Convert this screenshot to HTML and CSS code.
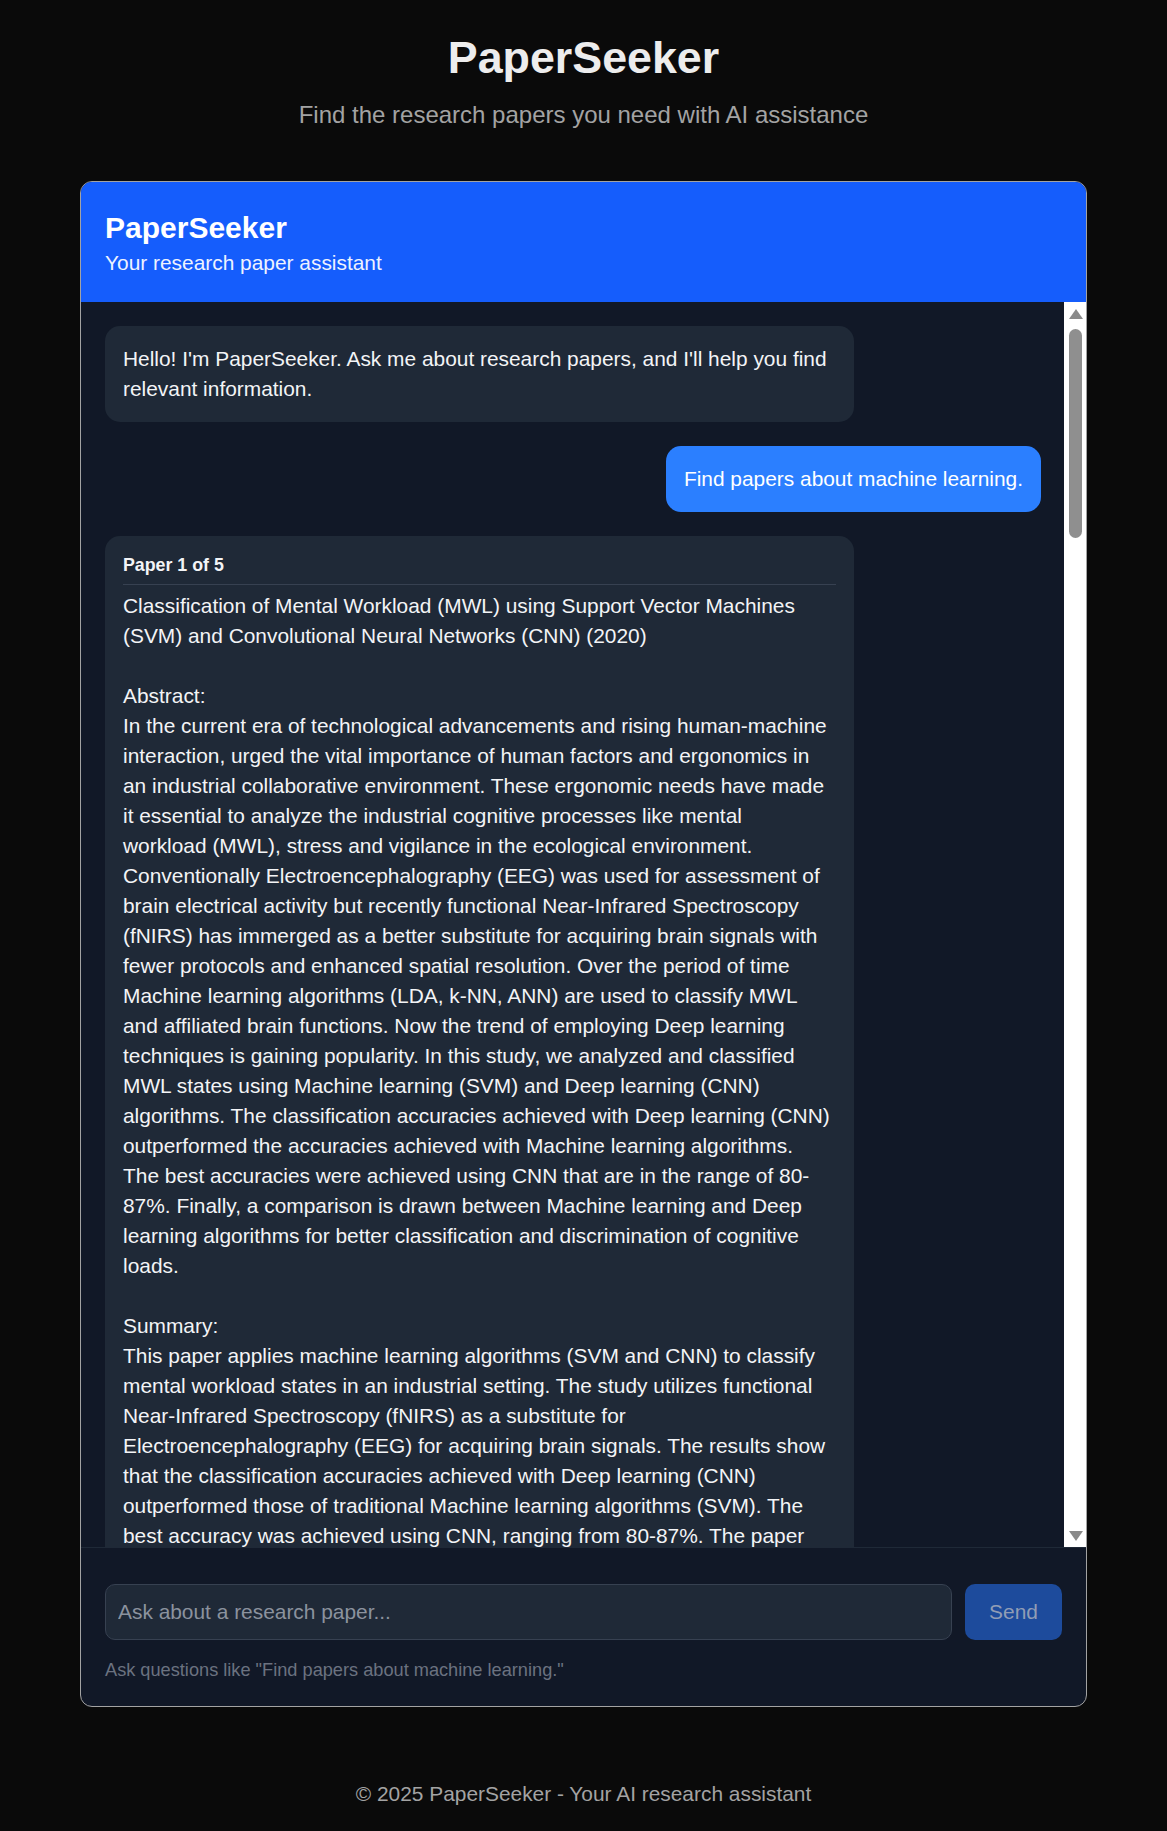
FILE: index.html
```html
<!DOCTYPE html>
<html lang="en">
<head>
<meta charset="utf-8">
<title>PaperSeeker</title>
<link rel="stylesheet" href="styles.css">
</head>
<body>
<main class="page">
  <header class="hero">
    <h1 class="hero-title">PaperSeeker</h1>
    <p class="hero-sub">Find the research papers you need with AI assistance</p>
  </header>

  <section class="chat">
    <div class="chat-head">
      <h2 class="chat-title">PaperSeeker</h2>
      <p class="chat-sub">Your research paper assistant</p>
    </div>

    <div class="msg-area">
      <div class="messages">
        <div class="msg msg-bot">Hello! I'm PaperSeeker. Ask me about research papers, and I'll help you find relevant information.</div>

        <div class="msg msg-user">Find papers about machine learning.</div>

        <div class="msg msg-bot">
          <div class="paper-head">Paper 1 of 5</div>
          <div class="paper-body">Classification of Mental Workload (MWL) using Support Vector Machines (SVM) and Convolutional Neural Networks (CNN) (2020)<br><br>Abstract:<br>In the current era of technological advancements and rising human-machine<br>interaction, urged the vital importance of human factors and ergonomics in<br>an industrial collaborative environment. These ergonomic needs have made<br>it essential to analyze the industrial cognitive processes like mental<br>workload (MWL), stress and vigilance in the ecological environment.<br>Conventionally Electroencephalography (EEG) was used for assessment of<br>brain electrical activity but recently functional Near-Infrared Spectroscopy<br>(fNIRS) has immerged as a better substitute for acquiring brain signals with<br>fewer protocols and enhanced spatial resolution. Over the period of time<br>Machine learning algorithms (LDA, k-NN, ANN) are used to classify MWL<br>and affiliated brain functions. Now the trend of employing Deep learning<br>techniques is gaining popularity. In this study, we analyzed and classified<br>MWL states using Machine learning (SVM) and Deep learning (CNN)<br>algorithms. The classification accuracies achieved with Deep learning (CNN)<br>outperformed the accuracies achieved with Machine learning algorithms.<br>The best accuracies were achieved using CNN that are in the range of 80-<br>87%. Finally, a comparison is drawn between Machine learning and Deep<br>learning algorithms for better classification and discrimination of cognitive<br>loads.<br><br>Summary:<br>This paper applies machine learning algorithms (SVM and CNN) to classify mental workload states in an industrial setting. The study utilizes functional Near-Infrared Spectroscopy (fNIRS) as a substitute for Electroencephalography (EEG) for acquiring brain signals. The results show that the classification accuracies achieved with Deep learning (CNN) outperformed those of traditional Machine learning algorithms (SVM). The best accuracy was achieved using CNN, ranging from 80-87%. The paper also compares Machine learning and Deep learning approaches for the classification and discrimination of cognitive loads.</div>
        </div>
      </div>

      <div class="scrollbar" aria-hidden="true">
        <span class="sb-btn sb-up"><span class="sb-arrow sb-arrow-up"></span></span>
        <span class="sb-track"><span class="sb-thumb"></span></span>
        <span class="sb-btn sb-down"><span class="sb-arrow sb-arrow-down"></span></span>
      </div>
    </div>

    <form class="composer">
      <div class="composer-row">
        <input class="composer-input" type="text" placeholder="Ask about a research paper...">
        <button class="composer-send" type="submit" disabled>Send</button>
      </div>
      <p class="composer-hint">Ask questions like "Find papers about machine learning."</p>
    </form>
  </section>

  <footer class="foot">© 2025 PaperSeeker - Your AI research assistant</footer>
</main>
</body>
</html>
```

FILE: styles.css
```css
* {
  box-sizing: border-box;
}

html,
body {
  margin: 0;
  padding: 0;
}

body {
  background: #0a0a0a;
  color: #ededed;
  font-family: "Liberation Sans", Arial, Helvetica, sans-serif;
}

.page {
  padding-top: 30px;
}

.hero {
  text-align: center;
}

.hero-title {
  margin: 0;
  font-size: 44.8px;
  line-height: 54px;
  font-weight: 700;
  color: #ededed;
}

.hero-sub {
  margin: 13px 0 0;
  font-size: 24px;
  line-height: 36px;
  color: #a3a3a3;
}

.chat {
  width: 1007px;
  margin: 48px auto 0;
  border: 1px solid #a3a3a3;
  border-radius: 12px;
  overflow: hidden;
  background: #111827;
}

.chat-head {
  background: #155dfc;
  padding: 27.5px 24px 24px;
}

.chat-title {
  margin: 0;
  font-size: 30px;
  line-height: 36px;
  font-weight: 700;
  color: #ffffff;
}

.chat-sub {
  margin: 2.5px 0 0;
  font-size: 20.9px;
  line-height: 30px;
  color: #eef2ff;
}

.msg-area {
  display: flex;
  height: 1245px;
  background: #111827;
}

.messages {
  flex: 1;
  min-width: 0;
  overflow: hidden;
  padding: 24px 23px 24px 24px;
  display: flex;
  flex-direction: column;
  gap: 24px;
}

.scrollbar {
  width: 22px;
  flex-shrink: 0;
  display: flex;
  flex-direction: column;
  background: #ffffff;
}

.sb-btn {
  height: 22px;
  flex-shrink: 0;
  display: flex;
  justify-content: center;
  padding-left: 1px;
}

.sb-up {
  padding-top: 7px;
}

.sb-down {
  padding-top: 6px;
}

.sb-arrow {
  width: 0;
  height: 0;
  border-left: 7.3px solid transparent;
  border-right: 7.3px solid transparent;
}

.sb-arrow-up {
  border-bottom: 10px solid #8a8a8a;
}

.sb-arrow-down {
  border-top: 10.5px solid #8a8a8a;
}

.sb-track {
  flex: 1;
  padding: 5px 4px 0 5px;
}

.sb-thumb {
  display: block;
  height: 209px;
  border-radius: 6.5px;
  background: #8f8f8f;
}

.msg {
  max-width: 80%;
  padding: 18px;
  border-radius: 15px;
  font-size: 20.9px;
  line-height: 30px;
  flex-shrink: 0;
}

.msg-bot {
  align-self: flex-start;
  background: #1f2937;
  color: #f3f4f6;
}

.msg-user {
  align-self: flex-end;
  background: #2b7fff;
  color: #ffffff;
}

.paper-head {
  font-size: 17.8px;
  line-height: 23px;
  font-weight: 700;
  padding-bottom: 6.5px;
  margin-bottom: 6.5px;
  border-bottom: 1px solid #374151;
}

.composer {
  margin: 0;
  border-top: 1px solid #1f2937;
  padding: 36px 24px 22px;
}

.composer-row {
  display: flex;
  gap: 12.7px;
}

.composer-input {
  flex: 1;
  min-width: 0;
  height: 56px;
  margin: 0;
  padding: 0 12px;
  background: #1f2937;
  border: 1px solid #374151;
  border-radius: 10px;
  color: #f3f4f6;
  font-family: inherit;
  font-size: 20.9px;
  outline: none;
}

.composer-input::placeholder {
  color: #8b929e;
}

.composer-send {
  width: 97px;
  height: 56px;
  margin: 0;
  padding: 0;
  border: 0;
  border-radius: 10px;
  background: #1d4b9c;
  color: #919db5;
  font-family: inherit;
  font-size: 20.9px;
}

.composer-hint {
  margin: 16.7px 0 0;
  font-size: 18.2px;
  line-height: 27.3px;
  color: #6b7280;
}

.foot {
  margin-top: 71.8px;
  text-align: center;
  font-size: 20.9px;
  line-height: 30px;
  color: #a3a3a3;
}
```
